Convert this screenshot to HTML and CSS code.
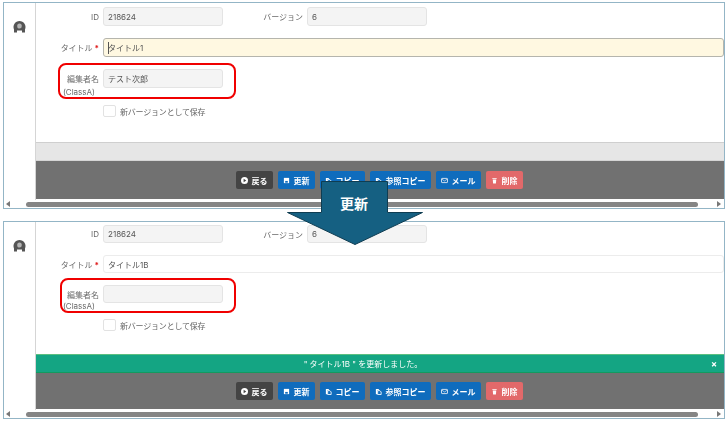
FILE: index.html
```html
<!DOCTYPE html>
<html lang="ja">
<head>
<meta charset="utf-8">
<title>更新</title>
<link rel="stylesheet" href="styles.css">
</head>
<body>
<svg class="defs" width="0" height="0" aria-hidden="true">
  <symbol id="i-back" viewBox="0 0 8 8"><circle cx="4" cy="4" r="4" fill="#fff"/><path d="M3 2l3 2-3 2z" fill="#444"/></symbol>
  <symbol id="i-save" viewBox="0 0 8 8"><path d="M1 1h6v6H1z" fill="#fff"/><path d="M2.500 4.500h3v2h-3z" fill="#0f6cbd"/></symbol>
  <symbol id="i-copy" viewBox="0 0 8 8"><path d="M1 1h3l1 1.500H2.500V7H1z" fill="#fff"/><path d="M3 3h2.500L7 4.500V7.500H3z" fill="none" stroke="#fff" stroke-width="1"/></symbol>
  <symbol id="i-mail" viewBox="0 0 8 8"><rect x=".6" y="1.600" width="6.800" height="4.800" rx=".6" fill="none" stroke="#e8eef5" stroke-width="1"/><path d="M1 2.500l3 2 3-2" fill="none" stroke="#e8eef5" stroke-width=".8"/></symbol>
  <symbol id="i-trash" viewBox="0 0 8 8"><path d="M1.500 1h5v1h-5zM2 2.800h4L5.600 7.500H2.400z" fill="#fff"/></symbol>
  <symbol id="i-user" viewBox="0 0 12 12"><path d="M6 0a6 6 0 0 0-5.500 8.400V11.500h3V9.500h5v2h3V8.400A6 6 0 0 0 6 0z" fill="#555"/><ellipse cx="6" cy="5" rx="2.300" ry="2.600" fill="#b5b5b5"/></symbol>
</svg>

<main class="page">
  <section class="panel panel-before">
    <div class="panel-body">
      <aside class="side"><svg class="avatar"><use href="#i-user"/></svg></aside>
      <div class="content">
        <form class="form">
          <div class="row">
            <label class="label">ID</label>
            <div class="field field-ro">218624</div>
            <label class="label label-version">バージョン</label>
            <div class="field field-ro">6</div>
          </div>
          <div class="row">
            <label class="label">タイトル<span class="req"> *</span></label>
            <div class="field field-title field-active"><span class="caret"></span>タイトル1</div>
          </div>
          <div class="row row-editor">
            <label class="label label-editor">編集者名<span class="label-sub">(ClassA)</span></label>
            <div class="field field-ro">テスト次郎</div>
            <span class="highlight"></span>
          </div>
          <div class="row-check">
            <span class="check"></span><span class="check-text">新バージョンとして保存</span>
          </div>
        </form>
        <div class="notice-empty"></div>
        <footer class="actions">
          <button class="btn btn-dark" type="button"><svg class="ico"><use href="#i-back"/></svg>戻る</button>
          <button class="btn" type="button"><svg class="ico"><use href="#i-save"/></svg>更新</button>
          <button class="btn" type="button"><svg class="ico"><use href="#i-copy"/></svg>コピー</button>
          <button class="btn" type="button"><svg class="ico"><use href="#i-copy"/></svg>参照コピー</button>
          <button class="btn" type="button"><svg class="ico"><use href="#i-mail"/></svg>メール</button>
          <button class="btn btn-red" type="button"><svg class="ico"><use href="#i-trash"/></svg>削除</button>
        </footer>
      </div>
    </div>
    <div class="scroll"><span class="arr arr-l"></span><span class="thumb"></span><span class="arr arr-r"></span></div>
  </section>

  <section class="panel panel-after">
    <div class="panel-body">
      <aside class="side"><svg class="avatar"><use href="#i-user"/></svg></aside>
      <div class="content">
        <form class="form">
          <div class="row">
            <label class="label">ID</label>
            <div class="field field-ro">218624</div>
            <label class="label label-version">バージョン</label>
            <div class="field field-ro">6</div>
          </div>
          <div class="row">
            <label class="label">タイトル<span class="req"> *</span></label>
            <div class="field field-title">タイトル1B</div>
          </div>
          <div class="row row-editor">
            <label class="label label-editor">編集者名<span class="label-sub">(ClassA)</span></label>
            <div class="field field-ro"></div>
            <span class="highlight"></span>
          </div>
          <div class="row-check">
            <span class="check"></span><span class="check-text">新バージョンとして保存</span>
          </div>
        </form>
        <div class="notice"><span class="notice-text">" タイトル1B " を更新しました。</span><span class="notice-close">×</span></div>
        <footer class="actions">
          <button class="btn btn-dark" type="button"><svg class="ico"><use href="#i-back"/></svg>戻る</button>
          <button class="btn" type="button"><svg class="ico"><use href="#i-save"/></svg>更新</button>
          <button class="btn" type="button"><svg class="ico"><use href="#i-copy"/></svg>コピー</button>
          <button class="btn" type="button"><svg class="ico"><use href="#i-copy"/></svg>参照コピー</button>
          <button class="btn" type="button"><svg class="ico"><use href="#i-mail"/></svg>メール</button>
          <button class="btn btn-red" type="button"><svg class="ico"><use href="#i-trash"/></svg>削除</button>
        </footer>
      </div>
    </div>
    <div class="scroll"><span class="arr arr-l"></span><span class="thumb"></span><span class="arr arr-r"></span></div>
  </section>

  <div class="arrow">
    <svg class="arrow-shape" viewBox="0 0 136 64"><path d="M34.500.5h66v31h35L68 63.500.5 31.500h34z" fill="#156082" stroke="#0f3d52"/></svg>
    <span class="arrow-text">更新</span>
  </div>
</main>
</body>
</html>
```
FILE: styles.css
```css
* { box-sizing: border-box; }
html, body { margin: 0; padding: 0; }
body {
  width: 728px;
  height: 423px;
  overflow: hidden;
  background: #fff;
  font-family: Inter, "Noto Sans CJK JP", sans-serif;
  font-size: 8px;
  color: #666;
}
.defs { position: absolute; }
.page {
  position: relative;
  display: flex;
  flex-direction: column;
  gap: 12px;
  padding: 2px 3px 0;
}
.panel {
  display: flex;
  flex-direction: column;
  border: 1px solid #93b5c6;
  background: #fff;
  filter: blur(.35px);
}
.panel-before { height: 207px; --field-h: 19px; --pad: 4px; --check: 5px; --foot: 38px; --btn-top: 10px; --sub-lh: 13px; --lab-top: 4px; }
.panel-after { height: 198px; --field-h: 18px; --pad: 3px; --check: 4px; --foot: 36px; --btn-top: 9px; --sub-lh: 11px; --lab-top: 5px; }

.panel-body { flex: 1; display: flex; min-height: 0; }
.side {
  width: 32px;
  flex: none;
  border-right: 1px solid #d5d5d5;
  padding: 18px 0 0 9px;
}
.avatar { display: block; width: 13px; height: 12px; }

.content { flex: 1; display: flex; flex-direction: column; min-width: 0; }
.form {
  flex: 1;
  display: flex;
  flex-direction: column;
  gap: 12px;
  padding: var(--pad) 0 0 0;
}
.row {
  position: relative;
  display: flex;
  align-items: center;
  height: var(--field-h);
}
.label {
  width: 63px;
  flex: none;
  margin-right: 4px;
  text-align: right;
  color: #6a6a6a;
  white-space: nowrap;
}
.label-version { width: 80px; margin-right: 4px; }
.req { color: #e02020; font-weight: 700; }
.field {
  display: flex;
  align-items: center;
  height: 100%;
  padding: 0 4px;
  border: 1px solid #e4e4e4;
  border-radius: 3px;
  color: #555;
  white-space: nowrap;
}
.field-ro { width: 120px; background: #f4f4f4; }
.field-title { flex: 1; background: #fff; border-color: #ececec; }
.field-active { background: #fff8e1; border-color: #b5b5ad; }
.caret { width: 1px; height: 12px; background: #555; margin-right: -1px; }

.label-editor { align-self: flex-start; height: 100%; padding-top: var(--lab-top); line-height: var(--sub-lh); }
.label-sub { display: block; padding-right: 4px; font-size: 8px; }
.highlight {
  position: absolute;
  left: 22px;
  top: -6px;
  width: 178px;
  height: 36px;
  border: 2px solid #f00000;
  border-radius: 8px;
}
.panel-after .highlight { left: 24px; top: -7px; width: 176px; height: 35px; }

.row-check { display: flex; align-items: center; margin-top: var(--check); padding-left: 67px; }
.check {
  width: 13px;
  height: 12px;
  margin-right: 4px;
  border: 1px solid #e2e2e2;
  border-radius: 2px;
  background: #fff;
}
.check-text { color: #666; letter-spacing: -.2px; }

.notice-empty {
  height: 19px;
  background: #e6e6e6;
  border-top: 1px solid #cfcfcf;
  border-bottom: 1px solid #d5d5d5;
}
.notice {
  display: flex;
  align-items: center;
  height: 19px;
  background: #14a583;
  border-top: 1px solid #5bbf80;
  border-bottom: 1px solid #129a5f;
  color: #fff;
}
.notice-text { flex: 1; text-align: center; padding-right: 14px; }
.notice-close { width: 20px; font-weight: 700; font-size: 9px; text-align: center; }

.actions {
  display: flex;
  justify-content: center;
  gap: 5px;
  height: var(--foot);
  padding: var(--btn-top) 2px 0 0;
  background: #717171;
  margin-bottom: 1px;
}
.btn {
  display: inline-flex;
  align-items: center;
  gap: 4px;
  height: 18px;
  padding: 0 5px;
  border: 0;
  border-radius: 2px;
  background: #0f6cbd;
  color: #fff;
  font: 700 8px Inter, "Noto Sans CJK JP", sans-serif;
  white-space: nowrap;
}
.btn-dark { background: #444; }
.btn-red { background: #e2696a; }
.ico { width: 7px; height: 7px; flex: none; }

.scroll {
  flex: none;
  display: flex;
  align-items: center;
  height: 8px;
  padding: 0 3px 0 2px;
  background: #fff;
}
.thumb { height: 5px; width: 672px; margin: 0 19px 0 16px; border-radius: 3px; background: #858585; }
.arr { width: 0; height: 0; border-style: solid; border-width: 3px 0; }
.arr-l { border-right: 4px solid #777; border-top-color: transparent; border-bottom-color: transparent; border-left: 0; }
.arr-r { border-left: 4px solid #777; border-top-color: transparent; border-bottom-color: transparent; border-right: 0; }

.arrow { position: absolute; left: 287px; top: 181px; width: 136px; height: 64px; }
.arrow-shape { display: block; width: 100%; height: 100%; }
.arrow-text {
  position: absolute;
  left: 0;
  right: 2px;
  top: 12px;
  text-align: center;
  color: #fff;
  font: 700 14px/20px "Noto Sans CJK JP", sans-serif;
}
```
